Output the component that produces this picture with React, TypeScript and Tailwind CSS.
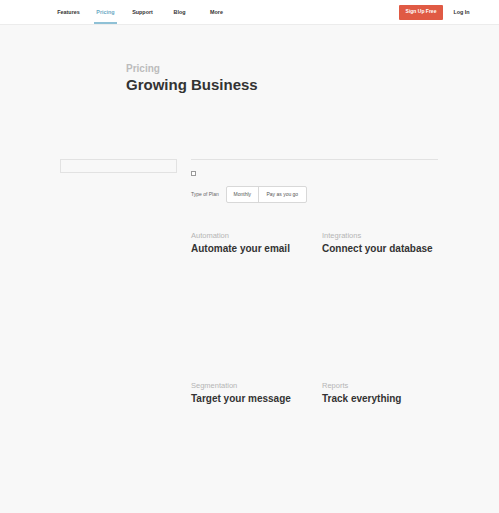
import React from "react";

const navItems = ["Features", "Pricing", "Support", "Blog", "More"];

const features = [
  { label: "Automation", title: "Automate your email" },
  { label: "Integrations", title: "Connect your database" },
  { label: "Segmentation", title: "Target your message" },
  { label: "Reports", title: "Track everything" },
];

export default function App() {
  return (
    <div
      className="min-h-[513px] w-full bg-[#f8f8f8] text-[#333]"
      style={{ fontFamily: '"Liberation Sans", Arial, sans-serif' }}
    >
      <header className="flex h-[25px] items-stretch border-b border-[#ececec] bg-white pl-[50px] pr-[19px]">
        {navItems.map((n) => (
          <div key={n} className="flex w-[37px] items-stretch justify-center">
            <span
              className={
                "flex items-center px-[2px] text-[5.4px] font-semibold " +
                (n === "Pricing"
                  ? "border-b-2 border-[#8fc1d6] pt-[2px] text-[#6aa9c4]"
                  : "text-[#333]")
              }
            >
              {n}
            </span>
          </div>
        ))}
        <div className="ml-auto flex items-center">
          <button className="flex h-[15px] w-[44px] items-center justify-center rounded-[1px] bg-[#e05a44] text-[5px] font-bold text-white">
            Sign Up Free
          </button>
          <div className="flex w-[37px] items-center justify-center text-[5.4px] font-semibold text-[#333]">
            Log In
          </div>
        </div>
      </header>

      <section className="pl-[126px] pt-[38px]">
        <div className="text-[10px] font-bold leading-[12px] text-[#bcbcbc]">Pricing</div>
        <h1 className="mt-[1px] text-[15px] font-bold leading-[18px] text-[#333]">
          Growing Business
        </h1>
      </section>

      <div className="mt-[65px] flex pl-[60px]">
        <div className="h-[14px] w-[117px] border border-[#e2e2e2] bg-[#f8f8f8]" />
        <div className="ml-[14px] w-[247px] border-t border-[#e2e2e2]">
          <div className="mt-[11px] h-[5px] w-[5px] border border-[#999] bg-white" />
          <div className="mt-[10px] flex items-center">
            <span className="mr-[7px] text-[5px] text-[#666]">Type of Plan</span>
            <div className="flex h-[17px] rounded-[2px] border border-[#d8d8d8] bg-white">
              <div className="flex w-[32px] items-center justify-center border-r border-[#d8d8d8] text-[5px] text-[#555]">
                Monthly
              </div>
              <div className="flex w-[47px] items-center justify-center text-[5px] text-[#555]">
                Pay as you go
              </div>
            </div>
          </div>
          <div className="mt-[28px] grid grid-cols-[131px_116px] gap-y-[126px]">
            {features.map((f) => (
              <div key={f.label}>
                <div className="text-[7.5px] leading-[9px] text-[#b5b5b5]">{f.label}</div>
                <div className="mt-[3px] text-[10px] font-bold leading-[12px] text-[#333]">
                  {f.title}
                </div>
              </div>
            ))}
          </div>
        </div>
      </div>
    </div>
  );
}
